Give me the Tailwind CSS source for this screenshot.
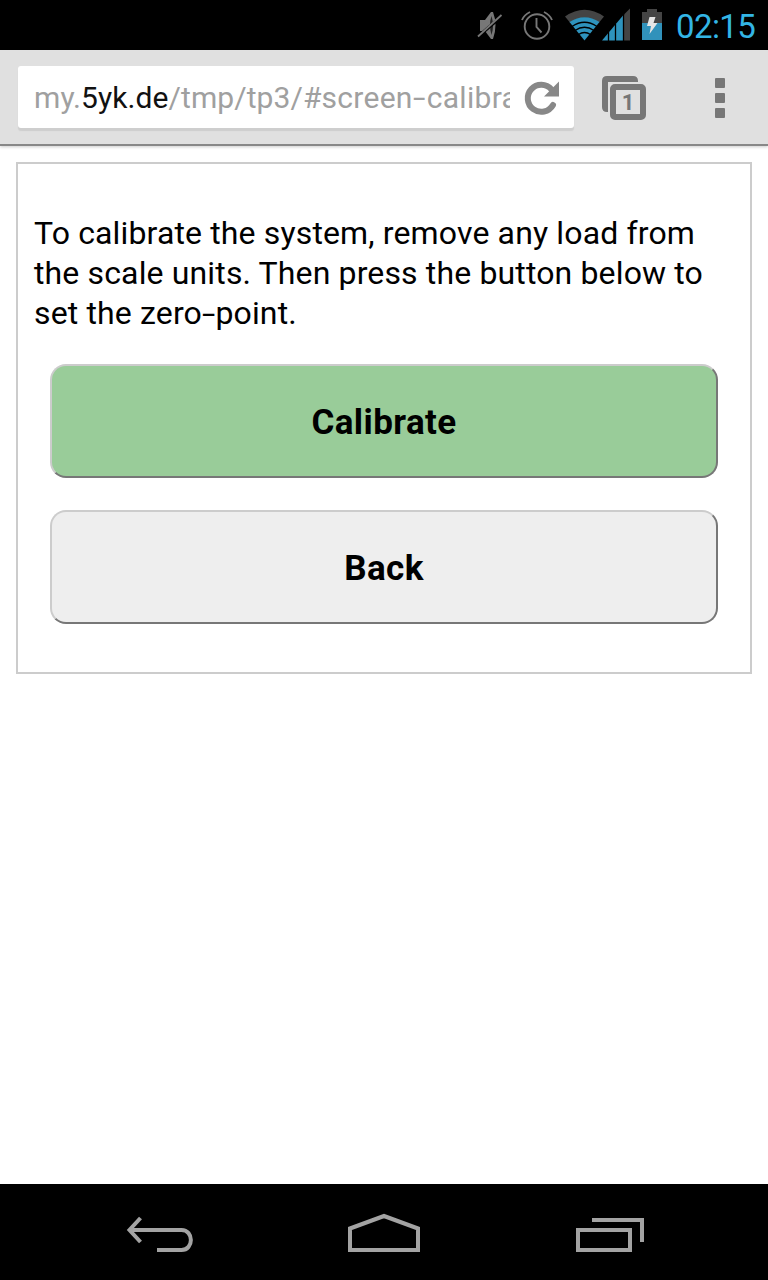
<!DOCTYPE html>
<html lang="en">
<head>
<meta charset="utf-8">
<title>Calibrate</title>
<script src="https://cdn.jsdelivr.net/npm/@tailwindcss/browser@4"></script>
</head>
<body class="w-[768px] h-[1280px] overflow-hidden bg-white flex flex-col font-['Roboto',sans-serif] text-black">
<header class="h-[50px] shrink-0 bg-black flex">
  <svg class="w-[668px] h-[50px] shrink-0" viewBox="0 0 668 50" fill="none">
    <path d="M480 20h5l6-8h2q5 13 0 27h-2l-6-8h-5z" fill="#777"/>
    <path d="M491.500 16q-3 9 0 19q3-9 0-19z" fill="#222"/>
    <path d="M477 37.500L502.500 15.500" stroke="#000" stroke-width="3"/>
    <path d="M478 36.500L501.500 15" stroke="#777" stroke-width="1.800"/>
    <g stroke="#777" stroke-width="1.900"><circle cx="537" cy="26.500" r="12.300"/><path d="M536.500 18v9l5 5.500M522 20q2-5 8-8M544 12q6 3 8 8"/></g>
    <path d="M565 16.500Q584.500 3 604 16.500L598.700 23Q584.500 12.500 570.300 23z" fill="#444"/>
    <path d="M569.500 22Q584.500 12.500 599.500 22L584.500 40.500z" fill="#2e93bd"/>
    <g stroke="#000" stroke-width="1.300"><path d="M572 26.500Q584.500 18 597 26.500M575 30.500Q584.500 24 594 30.500M578.500 34.500Q584.500 30.500 590.500 34.500"/></g>
    <path d="M602 40.500L623 15.500V40.500z" fill="#2e93bd"/>
    <path d="M624 14.500L630 8.500V40.500H624z" fill="#444"/>
    <path d="M608.500 32v9M615.500 24v17M623.500 14v27" stroke="#000" stroke-width="1.300"/>
    <path d="M642 12h5V9h10v3h5v11h-20z" fill="#444"/><path d="M642 23h20v17h-20z" fill="#3192bb"/>
    <path d="M649.500 17h6l-2 6h4l-8 11 1.500-8h-4z" fill="#e5e5e5"/>
  </svg>
  <div class="pl-2 text-[33px] leading-[53px] tracking-[-0.6px] text-[#33b5e5] whitespace-nowrap">02:15</div>
</header>
<div class="h-24 shrink-0 bg-[#e0e0e0] border-b-2 border-[#888] shadow-[0_1px_3px_rgba(0,0,0,0.2)] flex pt-4 pl-[18px]">
  <div class="w-[556px] h-[62px] bg-white rounded-[3px] shadow-[0_3px_1px_#cecece] flex items-center pl-4 shrink-0">
    <div class="w-[476px] pt-0.5 overflow-hidden whitespace-nowrap text-[30px] leading-[62px] tracking-[0.08px] text-[#a0a0a0]"><span>my.</span><span class="text-[#111]">5yk.de</span><span>/tmp/tp3/#</span><span class="tracking-[0.3px]">screen<span class="inline-block w-[14px] origin-left scale-x-150">-</span>calibra</span></div>
    <svg class="w-12 h-[62px] shrink-0" viewBox="510 66 48 62" fill="none" overflow="visible"><path d="M553 105A13.500 13.500 0 1 1 551.500 89.500" stroke="#888" stroke-width="6" stroke-linecap="round"/><path d="M559 81.500V96.500H544z" fill="#888"/></svg>
  </div>
  <svg class="w-[194px] h-[62px] shrink-0" viewBox="574 66 194 62" fill="none">
    <path d="M608 112h-1q-5 0-5-5V81q0-5 5-5h26q5 0 5 5v1h-30z" fill="#777"/>
    <rect x="608" y="82" width="40" height="40" rx="6" fill="#e0e0e0"/>
    <rect x="613" y="87" width="30" height="30" rx="2" stroke="#777" stroke-width="6"/>
    <text x="628" y="110" text-anchor="middle" font-family="Roboto" font-size="22" font-weight="700" fill="#777">1</text>
    <g fill="#777"><rect x="715" y="78" width="10" height="10" rx="1"/><rect x="715" y="93" width="10" height="10" rx="1"/><rect x="715" y="108" width="10" height="10" rx="1"/></g>
  </svg>
</div>
<main class="flex-1 pt-4 px-4">
  <section class="h-[512px] border-2 border-[#ccc] px-4 pt-[49px]">
    <p class="text-[32px] leading-10 tracking-[0.14px] whitespace-nowrap"><span>To calibrate the system, remove any load from</span><br><span>the scale units. Then press the button below to</span><br><span>set the zero<span class="inline-block w-[13.5px] origin-left scale-x-150">-</span>point.</span></p>
    <div class="px-4 pt-[31px] flex flex-col gap-8">
      <button class="h-[114px] pt-1 rounded-2xl border-2 border-t-[#ccc] border-l-[#ccc] border-r-[#777] border-b-[#777] bg-[#9c9] text-[35px] tracking-[0.4px] font-bold"><span>Calibrate</span></button>
      <button class="h-[114px] pt-1 rounded-2xl border-2 border-t-[#ccc] border-l-[#ccc] border-r-[#777] border-b-[#777] bg-[#eee] text-[35px] tracking-[0.4px] font-bold"><span>Back</span></button>
    </div>
  </section>
</main>
<nav class="h-24 shrink-0 bg-black">
  <svg class="w-[768px] h-24" viewBox="0 1184 768 96" fill="none" stroke="#a3a3a3" stroke-width="4">
    <path d="M130 1230H181.500C194 1230 194 1250 181.500 1250H157"/><path d="M140.500 1218L129.500 1230L140.500 1242"/>
    <path d="M350 1228.500L384 1216L418 1228.500V1250H350z"/>
    <path d="M578 1230H630V1250H578zM592 1220H642V1242"/>
  </svg>
</nav>
</body>
</html>
